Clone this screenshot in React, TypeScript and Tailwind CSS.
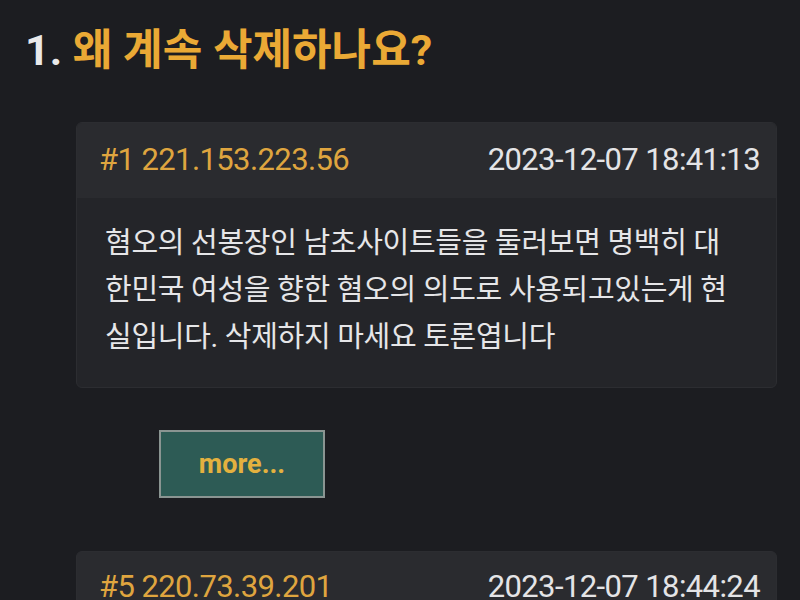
const posts = [
  {
    id: 1,
    ip: "221.153.223.56",
    date: "2023-12-07 18:41:13",
    lines: [
      "혐오의 선봉장인 남초사이트들을 둘러보면 명백히 대",
      "한민국 여성을 향한 혐오의 의도로 사용되고있는게 현",
      "실입니다. 삭제하지 마세요 토론엽니다",
    ],
  },
];

const font = { fontFamily: "Roboto, 'Noto Sans CJK KR', sans-serif" };

const App = () => {
  return (
    <div
      className="w-[800px] h-[600px] overflow-hidden bg-[#1c1d21]"
      style={font}
    >
      <h1 className="pl-[25px] pt-[23px] text-[43px] leading-[54px] font-bold text-[#e9e9ea]">
        1. <span className="text-[#eaa935]">왜 계속 삭제하나요?</span>
      </h1>

      <div className="pl-[76px] pr-[23px] pt-[45px]">
        {posts.map((post) => (
          <div
            key={post.id}
            className="rounded-md overflow-hidden bg-[#242529] border border-[#2c2d31]"
          >
            <div className="h-[75px] flex items-center justify-between pl-[22px] pr-[16px] bg-[#2a2b2f] text-[31px] tracking-[-0.6px]">
              <span className="text-[#dfa53f]">
                #{post.id} {post.ip}
              </span>
              <span className="text-[#e4e4e6]">{post.date}</span>
            </div>
            <div className="pl-[28px] pt-[22px] pb-[26px] text-[29px] leading-[47px] tracking-[-0.3px] text-[#e6e6e8]">
              {post.lines.map((line, index) => (
                <div key={index} className="whitespace-nowrap">
                  {line}
                </div>
              ))}
            </div>
          </div>
        ))}

        <div className="pl-[83px] pt-[42px] pb-[53px]">
          <button className="w-[166px] h-[68px] bg-[#2d5b55] border-2 border-[#8a9592] text-[#e3b13f] text-[27px] font-bold">
            more...
          </button>
        </div>

        <div className="rounded-md overflow-hidden bg-[#2a2b2f] border border-[#2c2d31]">
          <div className="h-[70px] flex items-center justify-between pl-[22px] pr-[16px] text-[31px] tracking-[-0.6px]">
            <span className="text-[#dfa53f]">#5 220.73.39.201</span>
            <span className="text-[#e4e4e6]">2023-12-07 18:44:24</span>
          </div>
        </div>
      </div>
    </div>
  );
};

export default App;
